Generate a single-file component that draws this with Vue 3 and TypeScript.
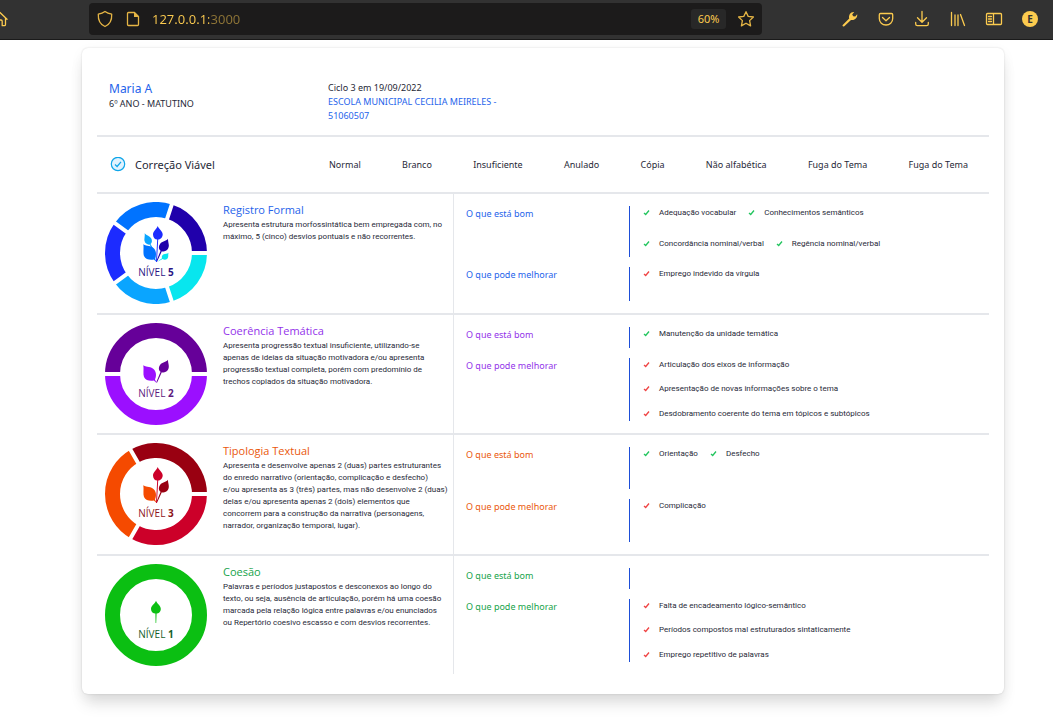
<script setup lang="ts">
import { ref } from 'vue'

interface Segment {
  color: string
  d: string
}
interface Leaf {
  shape: 'top' | 'left' | 'right' | 'upper' | 'small' | 'single'
  color: string
}
interface Competency {
  key: string
  title: string
  text: string
  level: number
  ink: string
  colors: string[]
  leaves: Leaf[]
  good: string[]
  improve: string[]
}

const address = ref('127.0.0.1:3000')

const statuses = ['Normal', 'Branco', 'Insuficiente', 'Anulado', 'Cópia', 'Não alfabética', 'Fuga do Tema', 'Fuga do Tema']

const leafPaths: Record<Leaf['shape'], string> = {
  top: 'M52.7 24C54 27.500 57.700 29 57.700 32.500C57.700 35.500 55 37.500 53.200 37.500L51.900 60H51L52.200 37.500C50 37.500 48 35.500 48 32.500C48 29 51.500 27.500 52.700 24Z',
  left: 'M38.300 42.200C42 44.500 46 43 49 46.500C52 50 51 54 50 56.500L51.600 60L48.800 57.600C45 58.300 40.500 57.500 39 54C37.800 51 39 46 38.300 42.200Z',
  right: 'M63 36.800C62.800 40 65 43.500 63 46.800C61.500 49.300 58.500 50 56.800 49.300L52 59.800L51.300 59.300L55.600 48.800C53.500 47.500 53.300 44 55.200 41.700C57.200 39.300 60.800 39.500 63 36.800Z',
  upper: 'M39.600 31.300C41.500 33.500 45 34 46.300 36.500C47.500 39 46.700 41 45.500 42L49.500 49L51.500 59L48.500 49.500L44.600 42.600C42.500 42.900 40 41.500 39.500 38.800C39 36.500 40.200 34 39.600 31.300Z',
  small: 'M63.500 50.700C62.800 53 64 55.300 62 57C60.500 58.200 58.500 57.700 57.700 57L52 60L57 56.200C56.500 54.700 57 53 58.700 52.200C60.300 51.500 62.200 52 63.500 50.700Z',
  single: 'M51 36.700C52.300 40 55.800 41.500 55.800 45C55.800 48 53.300 49.600 51.600 49.600L51.200 59H50.600L50.400 49.600C48.300 49.600 46 48 46 45C46 41.500 49.700 40 51 36.700Z',
}

const competencies: Competency[] = [
  {
    key: 'blue',
    title: 'Registro Formal',
    text: 'Apresenta estrutura morfossintática bem empregada com, no\nmáximo, 5 (cinco) desvios pontuais e não recorrentes.',
    level: 5,
    ink: '#2a1585',
    colors: ['#08e6ee', '#0aa5ff', '#1c2bff', '#0073ff', '#2000ab'],
    leaves: [
      { shape: 'upper', color: '#0aa5ff' },
      { shape: 'left', color: '#0073ff' },
      { shape: 'small', color: '#08e6ee' },
      { shape: 'right', color: '#2000ab' },
      { shape: 'top', color: '#1c2bff' },
    ],
    good: ['Adequação vocabular', 'Conhecimentos semânticos', 'Concordância nominal/verbal', 'Regência nominal/verbal'],
    improve: ['Emprego indevido da vírgula'],
  },
  {
    key: 'purple',
    title: 'Coerência Temática',
    text: 'Apresenta progressão textual insuficiente, utilizando-se\napenas de ideias da situação motivadora e/ou apresenta\nprogressão textual completa, porém com predomínio de\ntrechos copiados da situação motivadora.',
    level: 2,
    ink: '#5c1a80',
    colors: ['#9b0fff', '#660099'],
    leaves: [
      { shape: 'left', color: '#9b0fff' },
      { shape: 'right', color: '#660099' },
    ],
    good: ['Manutenção da unidade temática'],
    improve: ['Articulação dos eixos de informação', 'Apresentação de novas informações sobre o tema', 'Desdobramento coerente do tema em tópicos e subtópicos'],
  },
  {
    key: 'orange',
    title: 'Tipologia Textual',
    text: 'Apresenta e desenvolve apenas 2 (duas) partes estruturantes\ndo enredo narrativo (orientação, complicação e desfecho)\ne/ou apresenta as 3 (três) partes, mas não desenvolve 2 (duas)\ndelas e/ou apresenta apenas 2 (dois) elementos que\nconcorrem para a construção da narrativa (personagens,\nnarrador, organização temporal, lugar).',
    level: 3,
    ink: '#8c1420',
    colors: ['#cc0029', '#f54a00', '#990011'],
    leaves: [
      { shape: 'left', color: '#f54a00' },
      { shape: 'right', color: '#990011' },
      { shape: 'top', color: '#cc0029' },
    ],
    good: ['Orientação', 'Desfecho'],
    improve: ['Complicação'],
  },
  {
    key: 'green',
    title: 'Coesão',
    text: 'Palavras e períodos justapostos e desconexos ao longo do\ntexto, ou seja, ausência de articulação, porém há uma coesão\nmarcada pela relação lógica entre palavras e/ou enunciados\nou Repertório coesivo escasso e com desvios recorrentes.',
    level: 1,
    ink: '#14602a',
    colors: ['#0bbf12'],
    leaves: [{ shape: 'single', color: '#0bbf12' }],
    good: [],
    improve: ['Falta de encadeamento lógico-semântico', 'Períodos compostos mal estruturados sintaticamente', 'Emprego repetitivo de palavras'],
  },
]

function point(angle: number, radius: number): string {
  const rad = (angle * Math.PI) / 180
  return `${(51 + radius * Math.cos(rad)).toFixed(2)} ${(51 + radius * Math.sin(rad)).toFixed(2)}`
}

function segments(colors: string[]): Segment[] {
  const step = 360 / colors.length
  return colors.map((color, i) => ({
    color,
    d: `M${point(i * step, 43.5)}A43.5 43.5 0 0 1 ${point((i + 1) * step, 43.5)}`,
  }))
}

function gaps(count: number): string {
  return Array.from({ length: count }, (_, i) => `M${point((i * 360) / count, 34)}L${point((i * 360) / count, 53)}`).join('')
}
</script>

<template>
  <div class="page">
    <header class="toolbar">
      <button class="home" aria-label="Página inicial">
        <svg width="8" height="18" viewBox="9 0 8 18"><path d="M1.500 9.500L9 2.500L16 9.200M14.500 8V14.500Q14.500 15.700 13.300 15.700H11.200V11.200Q11.200 10 10 10H8" /></svg>
      </button>
      <div class="urlbar">
        <svg width="18" height="18" viewBox="0 0 18 18"><path d="M9 1.500C11 3 13 3.700 15.700 4.200C16 10 14 14.300 9 16.500C4 14.300 2 10 2.300 4.200C5 3.700 7 3 9 1.500Z" /></svg>
        <svg width="18" height="18" viewBox="0 0 18 18"><path d="M4.500 2.500H10.500L14.500 6.500V14.500Q14.500 15.500 13.500 15.500H4.500Q3.500 15.500 3.500 14.500V3.500Q3.500 2.500 4.500 2.500Z" /><path class="solid" d="M10 2V7H15Z" /></svg>
        <input v-model="address" class="address" type="text" aria-label="Endereço" />
        <button class="zoom">60%</button>
        <button class="tool" aria-label="Favoritar">
          <svg width="18" height="18" viewBox="0 0 18 18"><path d="M9 1.700L11.200 6.400L16.400 7L12.600 10.600L13.600 15.900L9 13.200L4.400 15.900L5.400 10.600L1.600 7L6.800 6.400Z" /></svg>
        </button>
      </div>
      <nav class="tools" aria-label="Ferramentas">
        <button class="tool" aria-label="Ferramentas de desenvolvimento">
          <svg width="18" height="18" viewBox="0 0 18 18"><path class="solid" d="M1.700 15L8.200 8.600C7.300 5.300 9.500 1.700 13.200 2L11.200 4.400L12.200 6.300L14.200 6.500L16.200 4.300C16.700 8 13.500 10.700 10 9.900L3.300 16.200C2.200 17 1 16 1.700 15Z" /></svg>
        </button>
        <button class="tool" aria-label="Pocket">
          <svg width="18" height="18" viewBox="0 0 18 18"><path d="M3.500 3.500H14.500Q15.700 3.500 15.700 4.700V8.500C15.700 12.500 12.700 15 9 15C5.300 15 2.300 12.500 2.300 8.500V4.700Q2.300 3.500 3.500 3.500ZM5.500 7.500L9 10.700L12.500 7.500" /></svg>
        </button>
        <button class="tool" aria-label="Downloads">
          <svg width="18" height="18" viewBox="0 0 18 18"><path d="M9 1.500V12M4.500 7.800L9 12.200L13.500 7.800M2.700 12.500V14Q2.700 15.700 4.400 15.700H13.600Q15.300 15.700 15.300 14V12.500" /></svg>
        </button>
        <button class="tool" aria-label="Biblioteca">
          <svg width="18" height="18" viewBox="0 0 18 18"><path d="M2.500 2.500V15.500M6 5V15.500M9 5V15.500M11.500 4.500L15.500 15.500" /></svg>
        </button>
        <button class="tool" aria-label="Barra lateral">
          <svg width="18" height="18" viewBox="0 0 18 18"><path d="M2.500 3.500H15.500Q16.500 3.500 16.500 4.500V13.500Q16.500 14.500 15.500 14.500H2.500Q1.500 14.500 1.500 13.500V4.500Q1.500 3.500 2.500 3.500ZM8.500 3.500V14.500M3.500 6.500H6.500M3.500 9H6.500M3.500 11.500H6.500" /></svg>
        </button>
        <button class="tool avatar" aria-label="Conta">E</button>
      </nav>
    </header>

    <main class="content">
      <article class="card">
        <section class="student">
          <div>
            <h1>Maria A</h1>
            <p>6º ANO - MATUTINO</p>
          </div>
          <div>
            <p>Ciclo 3 em 19/09/2022</p>
            <p class="school">ESCOLA MUNICIPAL CECILIA MEIRELES -<br />51060507</p>
          </div>
        </section>

        <section class="status">
          <h2>
            <svg width="16" height="16" viewBox="0 0 16 16"><circle cx="8" cy="7" r="6.700" /><path d="M5 7.500L7.100 9.500L11 4.800" /></svg>
            Correção Viável
          </h2>
          <ul>
            <li v-for="(s, i) in statuses" :key="i">{{ s }}</li>
          </ul>
        </section>

        <div class="rows">
          <section v-for="c in competencies" :key="c.key" class="row" :class="c.key">
            <div class="summary">
              <svg class="ring" width="102" height="102" viewBox="0 0 102 102">
                <circle v-if="c.colors.length === 1" cx="51" cy="51" r="43.5" :stroke="c.colors[0]" />
                <template v-else>
                  <path v-for="s in segments(c.colors)" :key="s.color" :d="s.d" :stroke="s.color" />
                  <path class="gap" :d="gaps(c.colors.length)" />
                </template>
                <path v-for="l in c.leaves" :key="l.shape" class="leaf" :d="leafPaths[l.shape]" :fill="l.color" />
                <text x="51" y="74" text-anchor="middle" :fill="c.ink">NÍVEL <tspan class="level">{{ c.level }}</tspan></text>
              </svg>
              <div class="about">
                <h3>{{ c.title }}</h3>
                <p>{{ c.text }}</p>
              </div>
            </div>
            <div class="feedback">
              <h4>O que está bom</h4>
              <ul class="good">
                <li v-for="item in c.good" :key="item">
                  <svg width="7" height="7" viewBox="0 0 7 7"><path d="M1 4L2.700 5.500L6 1.500" /></svg>{{ item }}
                </li>
              </ul>
              <h4>O que pode melhorar</h4>
              <ul class="improve">
                <li v-for="item in c.improve" :key="item">
                  <svg width="7" height="7" viewBox="0 0 7 7"><path d="M1 4L2.700 5.500L6 1.500" /></svg>{{ item }}
                </li>
              </ul>
            </div>
          </section>
        </div>
      </article>
    </main>
  </div>
</template>

<style>
body {
  margin: 0;
  background: #fff;
}
</style>

<style scoped>
.page {
  font-family: 'Noto Sans', 'Open Sans', sans-serif;
  color: #1f2937;
}
h1, h2, h3, h4, p, ul {
  margin: 0;
  padding: 0;
  font-weight: 400;
  list-style: none;
}
button {
  padding: 0;
  border: 0;
  background: none;
  color: inherit;
  font: inherit;
}
.toolbar {
  display: flex;
  align-items: center;
  box-sizing: border-box;
  height: 40px;
  padding: 0 13px 2px 0;
  border-bottom: 1px solid #1a1a1a;
  background: #323232;
  color: #fccb4f;
}
.toolbar svg {
  display: block;
  flex: none;
  fill: none;
  stroke: currentColor;
  stroke-width: 1.3;
  stroke-linejoin: round;
  stroke-linecap: round;
}
.toolbar svg .solid {
  fill: currentColor;
  stroke: none;
}
.home {
  width: 8px;
  margin-right: 81px;
}
.urlbar {
  display: flex;
  flex: 1;
  align-items: center;
  gap: 10px;
  box-sizing: border-box;
  height: 32px;
  min-width: 0;
  padding: 0 6px 0 7px;
  border-radius: 4px;
  background: #1c1b1b;
  color: #e5b545;
}
.address {
  flex: 1;
  min-width: 0;
  padding: 0;
  border: 0;
  outline: 0;
  background: linear-gradient(90deg, #fccb4f 57px, #8d7436 57px);
  -webkit-background-clip: text;
  background-clip: text;
  color: transparent;
  font: 13px/20px 'Noto Sans', 'Open Sans', sans-serif;
}
.zoom {
  width: 35px;
  height: 20px;
  border-radius: 3px;
  background: #282828;
  color: #fccb4f;
  font-size: 11px;
}
.tools {
  display: flex;
  gap: 16px;
  margin-left: 78px;
}
.tool {
  display: flex;
  align-items: center;
  justify-content: center;
  width: 20px;
  height: 20px;
}
.avatar {
  width: 16px;
  height: 16px;
  margin: 2px;
  border-radius: 50%;
  background: #fccb4f;
  color: #323232;
  font-size: 10px;
  font-weight: 700;
}
.content {
  padding: 8px 49px 24px 82px;
}
.card {
  padding: 0 15px 20px;
  border-radius: 6px;
  background: #fff;
  box-shadow: 0 0 2px rgba(0, 0, 0, 0.16), 0 12px 16px -3px rgba(0, 0, 0, 0.12), 0 4px 14px rgba(0, 0, 0, 0.05);
}
.student {
  display: grid;
  grid-template-columns: 219px 200px;
  box-sizing: border-box;
  min-height: 87px;
  padding: 33px 12px 12px;
  font-size: 9px;
  line-height: 14px;
}
.student h1 {
  color: #2563eb;
  font-size: 12px;
  line-height: 16px;
}
.school {
  color: #2563eb;
}
.status {
  display: flex;
  align-items: center;
  height: 55px;
  padding: 0 21px 0 13px;
  border-top: 2px solid #e5e7eb;
}
.status h2 {
  display: flex;
  flex: none;
  align-items: center;
  gap: 9px;
  width: 219px;
  font-size: 11px;
}
.status h2 svg {
  fill: #e0f2fe;
  stroke: #0ea5e9;
  stroke-width: 1.2;
}
.status ul {
  display: flex;
  flex: 1;
  justify-content: space-between;
  font-size: 9px;
}
.rows {
  display: grid;
  grid-auto-rows: 1fr;
  min-height: 482px;
}
.row {
  display: grid;
  grid-template-columns: 356fr 536fr;
  border-top: 2px solid #e5e7eb;
}
.summary {
  display: flex;
  gap: 16px;
  min-width: 0;
  padding: 8px 0 8px 8px;
}
.ring {
  flex: none;
  fill: none;
  stroke-width: 15;
}
.ring .gap {
  stroke: #fff;
  stroke-width: 4;
}
.ring text {
  font-family: 'Open Sans', 'Noto Sans', sans-serif;
  font-size: 10px;
}
.ring .level {
  font-weight: 700;
}
.about h3 {
  margin-bottom: 1px;
  font-family: 'Open Sans', 'Noto Sans', sans-serif;
  font-size: 11px;
  line-height: 16px;
}
.about p {
  font-family: Roboto, 'Noto Sans', sans-serif;
  font-size: 8px;
  line-height: 12px;
  white-space: pre;
}
.feedback {
  display: grid;
  grid-template-columns: 163fr 348fr;
  gap: 10px 0;
  padding: 12px;
  border-left: 1px solid #e5e7eb;
}
.feedback h4 {
  font-size: 9px;
  line-height: 16px;
}
.feedback ul {
  display: flex;
  flex-wrap: wrap;
  gap: 10px 12px;
  min-height: 20px;
  padding-left: 13px;
  border-left: 1px solid #1d4ed8;
  font-family: Roboto, 'Noto Sans', sans-serif;
  font-size: 8px;
  line-height: 14px;
}
.feedback li {
  white-space: nowrap;
}
.feedback li svg {
  margin-right: 9px;
  vertical-align: -1px;
  fill: none;
  stroke: currentColor;
  stroke-width: 1.3;
}
.good svg { color: #22c55e; }
.improve svg { color: #ef4444; }
.blue h3, .blue h4 { color: #2563eb; }
.purple h3, .purple h4 { color: #9333ea; }
.orange h3, .orange h4 { color: #ea580c; }
.green h3, .green h4 { color: #16a34a; }
</style>
